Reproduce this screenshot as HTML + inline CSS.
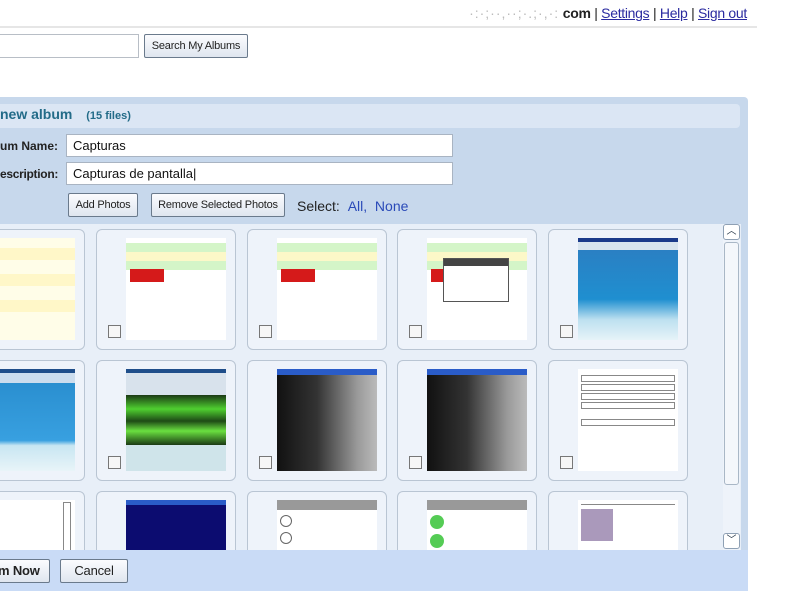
<!DOCTYPE html>
<html><head><meta charset="utf-8"><style>
*{box-sizing:border-box;margin:0;padding:0}
body{width:800px;height:600px;overflow:hidden;background:#fff;font-family:"Liberation Sans",sans-serif;position:relative}
.a{position:absolute}
a{color:#2a2aa0}
.btn{position:absolute;border:1px solid #6a7a8c;border-radius:2px;background:linear-gradient(#fbfcfe,#dfe6ef);font-size:11px;color:#222;text-align:center;white-space:nowrap;letter-spacing:-0.2px}
.card{position:absolute;width:140px;height:121px;border:1px solid #b9c5d3;border-radius:6px;background:#eef3fa}
.th{position:absolute;left:29px;top:8px;width:100px;height:102px;background:#fff;overflow:hidden}
.cb{position:absolute;left:11px;top:95px;width:13px;height:13px;border:1px solid #777;background:#f6f6f6}
</style></head><body>
<div class="a" style="right:53px;top:5px;font-size:14px;color:#222;white-space:nowrap;letter-spacing:-0.3px"><span style="color:#bbb;letter-spacing:1px">·:·;··,··;·.;·,·:</span> <b>com</b> | <a href="#">Settings</a> | <a href="#">Help</a> | <a href="#">Sign out</a></div>
<div class="a" style="left:0;top:26px;width:757px;height:2px;background:#e6e6e6"></div>
<div class="a" style="left:-4px;top:34px;width:143px;height:24px;border:1px solid #b8bec6;background:#fff"></div>
<div class="btn" style="left:144px;top:34px;width:104px;height:24px;line-height:22px">Search My Albums</div>

<div class="a" style="left:0;top:97px;width:748px;height:494px;background:#c7d8ec;border-radius:0 4px 4px 0"></div>
<div class="a" style="left:0;top:104px;width:740px;height:24px;background:#dbe6f4;border-radius:0 4px 4px 0"></div>
<div class="a" style="left:0;top:106px;font-size:14px;font-weight:bold;color:#226b88">new album <span style="font-size:11px;margin-left:10px">(15 files)</span></div>
<div class="a" style="left:0;top:139px;font-size:12px;font-weight:bold;color:#222">um Name:</div>
<div class="a" style="left:0;top:167px;font-size:12px;font-weight:bold;color:#222;letter-spacing:-0.3px">escription:</div>
<div class="a" style="left:66px;top:134px;width:387px;height:23px;border:1px solid #a9b4c2;background:#fff;font-size:13px;padding:3px 6px;color:#111">Capturas</div>
<div class="a" style="left:66px;top:162px;width:387px;height:23px;border:1px solid #a9b4c2;background:#fff;font-size:13px;padding:3px 6px;color:#111">Capturas de pantalla|</div>
<div class="btn" style="left:68px;top:193px;width:70px;height:24px;line-height:22px">Add Photos</div>
<div class="btn" style="left:151px;top:193px;width:134px;height:24px;line-height:22px">Remove Selected Photos</div>
<div class="a" style="left:297px;top:198px;font-size:14px;color:#222">Select: <span style="color:#2a4ab8;margin-left:4px">All,&nbsp; None</span></div>

<div class="a" style="left:0;top:224px;width:741px;height:326px;background:#e8eff8;overflow:hidden">
 <div class="card" style="left:-55px;top:5px"><div class="th" style="background:#fffde8"><div style="height:12px;margin-top:10px;background:#fff7c8"></div><div style="height:12px;margin-top:14px;background:#fff7c8"></div><div style="height:12px;margin-top:14px;background:#fff7c8"></div></div></div>
 <div class="card" style="left:96px;top:5px"><div class="th"><div style="height:9px;margin-top:5px;background:#d4f5c8"></div><div style="height:9px;background:#fcf8c8"></div><div style="height:9px;background:#d4f5c8"></div><div style="position:absolute;left:4px;top:31px;width:34px;height:13px;background:#d51a1a"></div></div><div class="cb"></div></div>
 <div class="card" style="left:247px;top:5px"><div class="th"><div style="height:9px;margin-top:5px;background:#d4f5c8"></div><div style="height:9px;background:#fcf8c8"></div><div style="height:9px;background:#d4f5c8"></div><div style="position:absolute;left:4px;top:31px;width:34px;height:13px;background:#d51a1a"></div></div><div class="cb"></div></div>
 <div class="card" style="left:397px;top:5px"><div class="th"><div style="height:9px;margin-top:5px;background:#d4f5c8"></div><div style="height:9px;background:#fcf8c8"></div><div style="height:9px;background:#d4f5c8"></div><div style="position:absolute;left:4px;top:31px;width:34px;height:13px;background:#d51a1a"></div><div style="position:absolute;left:16px;top:20px;width:66px;height:44px;border:1px solid #555;background:#fff"><div style="height:7px;background:#444"></div></div></div><div class="cb"></div></div>
 <div class="card" style="left:548px;top:5px"><div class="th" style="background:linear-gradient(#2d7cc0,#1f8fd0 60%,#bde0f0 80%,#e6f3f8)"><div style="height:4px;background:#1a3a8a"></div><div style="height:8px;background:#d8e4ee"></div></div><div class="cb"></div></div>

 <div class="card" style="left:-55px;top:136px"><div class="th" style="background:linear-gradient(#1f4e8a 4px,#cde 4px,#cde 14px,#2a8fd0 14px,#38a0e0 70%,#c8e6f2 75%,#e8f4f8)"></div></div>
 <div class="card" style="left:96px;top:136px"><div class="th" style="background:linear-gradient(#1f4e8a 4px,#d8e2ec 4px,#d8e2ec 26px,#1b3a14 26px,#4fd030 40px,#1e4a16 52px,#6ae040 62px,#1b3a14 76px,#cfe4ea 76px)"></div><div class="cb"></div></div>
 <div class="card" style="left:247px;top:136px"><div class="th" style="background:linear-gradient(90deg,#111,#333 40%,#999 80%,#bbb);"><div style="height:6px;background:#2a5cc8"></div></div><div class="cb"></div></div>
 <div class="card" style="left:397px;top:136px"><div class="th" style="background:linear-gradient(90deg,#111,#333 40%,#999 80%,#bbb);"><div style="height:6px;background:#2a5cc8"></div></div><div class="cb"></div></div>
 <div class="card" style="left:548px;top:136px"><div class="th"><div style="margin:6px 3px 0;height:7px;border:1px solid #888"></div><div style="margin:2px 3px 0;height:7px;border:1px solid #888"></div><div style="margin:2px 3px 0;height:7px;border:1px solid #888"></div><div style="margin:2px 3px 0;height:7px;border:1px solid #888"></div><div style="margin:10px 3px 0;height:7px;border:1px solid #888"></div></div><div class="cb"></div></div>

 <div class="card" style="left:-55px;top:267px"><div class="th"><div style="position:absolute;right:4px;top:2px;width:8px;height:50px;border:1px solid #888"></div></div></div>
 <div class="card" style="left:96px;top:267px"><div class="th" style="background:#0c0c70"><div style="height:5px;background:#2a5cc8"></div></div></div>
 <div class="card" style="left:247px;top:267px"><div class="th"><div style="height:10px;background:#999"></div><div style="margin:5px 3px;width:12px;height:12px;border-radius:6px;border:1px solid #666"></div><div style="margin:5px 3px;width:12px;height:12px;border-radius:6px;border:1px solid #666"></div></div></div>
 <div class="card" style="left:397px;top:267px"><div class="th"><div style="height:10px;background:#999"></div><div style="margin:5px 3px;width:14px;height:14px;border-radius:7px;background:#5c5"></div><div style="margin:5px 3px;width:14px;height:14px;border-radius:7px;background:#5c5"></div></div></div>
 <div class="card" style="left:548px;top:267px"><div class="th"><div style="margin:4px 3px 0;height:1px;background:#888"></div><div style="margin:4px 3px;width:32px;height:32px;background:#a9b"></div></div></div>

 <div class="a" style="left:723px;top:0;width:17px;height:326px;background:#eef3fa"></div>
 <div class="a" style="left:723px;top:0;width:17px;height:16px;border:1px solid #8ea0b4;border-radius:3px;background:#fff;font-size:10px;text-align:center;line-height:13px;color:#234">︿</div>
 <div class="a" style="left:724px;top:18px;width:15px;height:243px;border:1px solid #a9b7c6;border-radius:3px;background:#f4f7fb"></div>
 <div class="a" style="left:723px;top:309px;width:17px;height:16px;border:1px solid #8ea0b4;border-radius:3px;background:#fff;font-size:10px;text-align:center;line-height:14px;color:#234">﹀</div>
</div>

<div class="a" style="left:0;top:550px;width:748px;height:41px;background:#c9dbf6"></div>
<div class="btn" style="left:-20px;top:559px;width:70px;height:24px;line-height:22px;font-size:13px;font-weight:bold">um Now</div>
<div class="btn" style="left:60px;top:559px;width:68px;height:24px;line-height:22px;font-size:13px">Cancel</div>
</body></html>
